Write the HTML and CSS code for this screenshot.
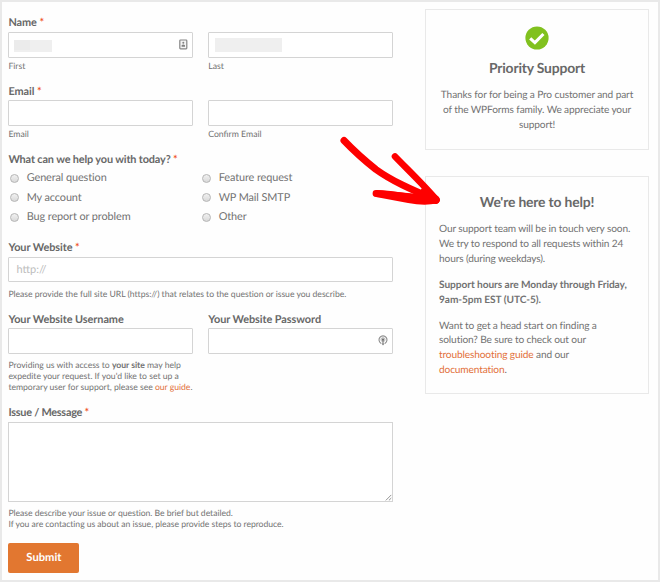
FILE: index.html
```html
<!DOCTYPE html>
<html lang="en">
<head>
<meta charset="utf-8">
<title>Support</title>
<link rel="stylesheet" href="styles.css">
</head>
<body>
<div class="page">
  <form class="form">
    <div class="label">Name <span class="req">*</span></div>
    <div class="row">
      <div class="col">
        <div class="input"><span class="redacted"><i></i></span>
          <svg class="contact" width="9" height="11" viewBox="0 0 9 11"><rect x=".8" y="1" width="7" height="8.8" rx=".7" fill="#f4f4f4" stroke="#868686" stroke-width="1.2"/><circle cx="4.3" cy="3.8" r="1" fill="#808080"/><path d="M2.6 7.7V6.3q1.7-1.7 3.4 0v1.4z" fill="#808080"/></svg>
        </div>
        <div class="sub">First</div>
      </div>
      <div class="col">
        <div class="input"><span class="redacted redacted-wide"></span></div>
        <div class="sub">Last</div>
      </div>
    </div>

    <div class="label label-email">Email <span class="req">*</span></div>
    <div class="row">
      <div class="col"><div class="input"></div><div class="sub">Email</div></div>
      <div class="col"><div class="input"></div><div class="sub">Confirm Email</div></div>
    </div>

    <div class="label label-choice">What can we help you with today? <span class="req">*</span></div>
    <div class="choices">
      <div class="choice"><span class="radio"></span>General question</div>
      <div class="choice"><span class="radio"></span>Feature request</div>
      <div class="choice"><span class="radio"></span>My account</div>
      <div class="choice"><span class="radio"></span>WP Mail SMTP</div>
      <div class="choice"><span class="radio"></span>Bug report or problem</div>
      <div class="choice"><span class="radio"></span>Other</div>
    </div>

    <div class="label label-site">Your Website <span class="req">*</span></div>
    <div class="input"><span class="placeholder">http://</span></div>
    <div class="desc">Please provide the full site URL (https://) that relates to the question or issue you describe.</div>

    <div class="row row-login">
      <div class="col">
        <div class="label">Your Website Username</div>
        <div class="input"></div>
        <div class="desc">Providing us with access to <b>your site</b> may help<br>expedite your request. If you'd like to set up a<br>temporary user for support, please see <a>our guide</a>.</div>
      </div>
      <div class="col">
        <div class="label">Your Website Password</div>
        <div class="input">
          <svg class="key" width="10" height="11" viewBox="0 0 10 11"><path d="M3.2 8.4A4 4 0 1 1 6.8 8.4" fill="none" stroke="#8b8b8b" stroke-width="1.1"/><circle cx="5" cy="4.6" r="2.1" fill="#d5d5d5" stroke="#aaa" stroke-width=".6"/><circle cx="5" cy="4.7" r="1.1" fill="#707070"/><path d="M4.4 5h1.2v3.6h1.1L5 10.5 3.4 8.6h1z" fill="#858585"/></svg>
        </div>
      </div>
    </div>

    <div class="label label-issue">Issue / Message <span class="req">*</span></div>
    <div class="area"><svg width="7" height="7" viewBox="0 0 7 7"><path d="M.8 6.4 6.3.9M3.9 6.4l2.4-2.4" stroke="#777" stroke-width=".8"/></svg></div>
    <div class="desc desc-issue">Please describe your issue or question. Be brief but detailed.<br>If you are contacting us about an issue, please provide steps to reproduce.</div>
    <div class="submit">Submit</div>
  </form>

  <aside class="side">
    <section class="card card-priority">
      <svg class="check" width="24" height="24" viewBox="0 0 24 24"><circle cx="12" cy="12" r="11.6" fill="#81c11f"/><path d="M5.2 12.4 9.900 16.700 18.400 8" fill="none" stroke="#fff" stroke-width="3.1"/></svg>
      <h2>Priority Support</h2>
      <p>Thanks for for being a Pro customer and part<br>of the WPForms family. We appreciate your<br>support!</p>
    </section>
    <section class="card card-help">
      <h2>We're here to help!</h2>
      <p>Our support team will be in touch very soon.<br>We try to respond to all requests within 24<br>hours (during weekdays).</p>
      <p><b>Support hours are Monday through Friday,<br>9am-5pm EST (UTC-5).</b></p>
      <p>Want to get a head start on finding a<br>solution? Be sure to check out our<br><a>troubleshooting guide</a> and our<br><a>documentation</a>.</p>
    </section>
  </aside>

  <svg class="arrow" width="120" height="90" viewBox="0 0 120 90"><g fill="none" stroke="#fe0000" stroke-linecap="round" stroke-linejoin="round"><path d="M14 15.500C24 26 34 35 46 44.500C62 56 80 64 106 75" stroke-width="7"/><path d="M65 31.500C77 44 94 60 106.500 75" stroke-width="6.600"/><path d="M46 68.500C65 69 82 73 106 75.500" stroke-width="6.800"/></g><path d="M46 65 88 69 92 63 101 66 109 72Q111 76 107 78.500 94 81 78 78L46 72z" fill="#fe0000"/></svg>
</div>
</body>
</html>
```
FILE: styles.css
```css
* { box-sizing: border-box; }
body { margin: 0; font-family: Lato, "Liberation Sans", sans-serif; color: #727272; text-rendering: geometricPrecision; }
.page {
  position: relative;
  width: 660px; height: 582px;
  border: 2px solid #e9e9e9;
  padding: 7px 9px 0 6.400px;
  display: flex; justify-content: space-between;
  background: #fefefe;
}
.form { width: 384.600px; padding-top: 5px; }
.label { height: 18px; font-size: 10.900px; line-height: 18px; font-weight: 700; letter-spacing: -.06px; color: #686868; white-space: nowrap; }
.req { color: #f0562b; }
.row { display: flex; gap: 15px; }
.col { width: 184.800px; }
.input {
  height: 25.500px; border: 1px solid #d4d4d4; border-radius: 1px; background: #fff;
  display: flex; align-items: center;
}
.redacted { width: 38px; height: 12px; margin: 2px 0 0 5px; background: #efefef; }
.redacted i { display: block; width: 16px; height: 10px; background: #ebebeb; }
.redacted-wide { width: 67px; height: 14px; margin: 0 0 0 6px; }
.contact { margin-left: auto; margin-right: 4px; }
.key { margin-left: auto; margin-right: 4px; }
.sub { margin-top: 2.500px; font-size: 8.700px; line-height: 12px; }
.label-email { margin-top: 11px; height: 17px; }
.label-choice { margin-top: 11px; height: 17px; letter-spacing: -.14px; }
.choices { display: grid; grid-template-columns: 192px 1fr; grid-auto-rows: 19.600px; }
.choice { display: flex; align-items: center; font-size: 10.900px; letter-spacing: -.1px; line-height: 16px; white-space: nowrap; }
.choices { position: relative; top: .5px; }
.radio {
  width: 9px; height: 9px; margin: 0 7.300px 0 2px; border-radius: 50%;
  border: 1px solid #b5b5b5; background: linear-gradient(#f1f1f1, #d9d9d9);
}
.label-site { margin-top: 12.200px; }
.placeholder { margin-left: 7px; font-size: 11px; color: #bdbdbd; }
.desc { margin-top: 5.200px; font-size: 8.650px; letter-spacing: -.02px; line-height: 11.200px; white-space: nowrap; }
a { color: #e2703a; }
.row-login { margin-top: 12.300px; }
.row-login .label { height: 17px; line-height: 17px; }
.label-issue { margin-top: 11.300px; letter-spacing: -.25px; }
.area { height: 80px; border: 1px solid #d4d4d4; background: #fff; display: flex; align-items: flex-end; justify-content: flex-end; }
.desc-issue { letter-spacing: -.04px; }
.submit {
  width: 71px; height: 30px; margin-top: 13.300px; border-radius: 2px;
  background: #e27730; color: #fff; font-size: 11.200px; font-weight: 700; line-height: 29px; text-align: center;
}
.side { width: 224px; }
.card { border: 1px solid #e9e9e9; padding: 0 13px; background: #fefefe; }
.card h2 { margin: 0; font-size: 13.900px; letter-spacing: -.17px; line-height: 20px; font-weight: 700; text-align: center; color: #686868; }
.card p { margin: 0 0 11px; font-size: 10.150px; letter-spacing: -.13px; line-height: 14.900px; white-space: nowrap; }
.card b { letter-spacing: -.06px; }
.card-priority { height: 141px; padding-top: 16px; text-align: center; }
.check { display: block; margin: 0 auto 8px; }
.card-priority h2 { margin-bottom: 10px; }
.card-help { height: 218px; margin-top: 26px; padding-top: 15px; }
.card-help h2 { margin-bottom: 10px; }
.arrow { position: absolute; left: 328px; top: 123px; }
```
